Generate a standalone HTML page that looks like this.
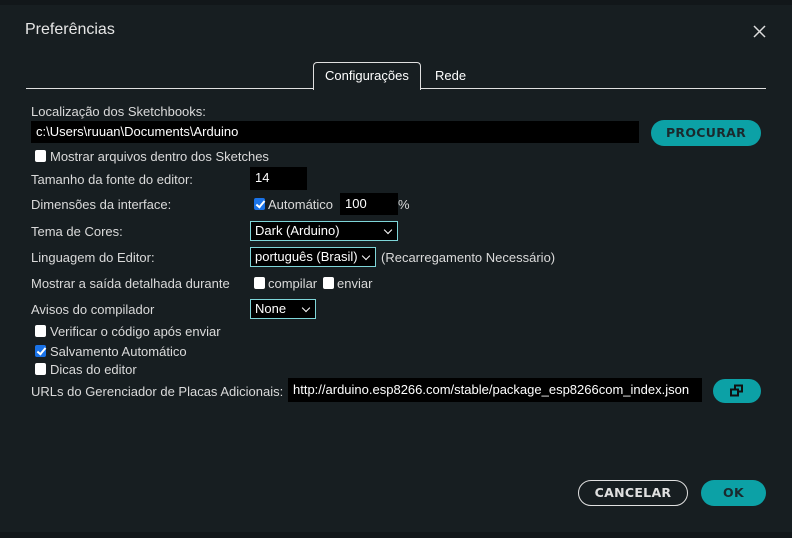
<!DOCTYPE html>
<html><head><meta charset="utf-8"><style>
*{margin:0;padding:0;box-sizing:border-box}
body{width:792px;height:538px;background:#171e21;position:relative;overflow:hidden;font-family:"Liberation Sans Narrow","Liberation Sans",sans-serif;font-size:13px;color:#dadada}
.a{position:absolute;white-space:nowrap}
.inp{position:absolute;background:#000;color:#fff;padding-left:5px;line-height:22px}
.sel{position:absolute;background:#000;border:1px solid #7fd6d9;color:#fff;padding-left:4px;line-height:18px}
.sel:after{content:"";position:absolute;right:6px;top:5px;width:5px;height:5px;border-right:1.5px solid #fff;border-bottom:1.5px solid #fff;transform:rotate(45deg)}
.cb{position:absolute;width:11px;height:12px;background:#fff;border-radius:2px}
.cb.on{background:#1a73e8}
.cb.on:after{content:"";position:absolute;left:3.5px;top:1px;width:3px;height:7px;border-right:2px solid #fff;border-bottom:2px solid #fff;transform:rotate(40deg)}
.btn{position:absolute;border-radius:14px;font-family:"DejaVu Sans","Liberation Sans",sans-serif;font-weight:bold;text-align:center;font-size:12.5px;letter-spacing:.3px}
</style></head><body>
<div style="position:absolute;left:0;top:0;width:792px;height:5px;background:#12171a"></div>
<div style="position:absolute;left:0;top:532px;width:792px;height:6px;background:#12171a"></div>
<div class="a" style="left:25px;top:21px;font-size:16px;color:#e6e6e6">Preferências</div>
<svg class="a" style="left:753px;top:25px" width="13" height="13"><path d="M1 1L12 12M12 1L1 12" stroke="#ddd" stroke-width="1.5"/></svg>
<div style="position:absolute;left:26px;top:88px;width:740px;height:1px;background:#e0e0e0"></div>
<div style="position:absolute;left:313px;top:62px;width:108px;height:28px;border:1px solid #e0e0e0;border-bottom:none;border-radius:4px 4px 0 0;background:#171e21"></div>
<div class="a" style="left:325px;top:68px;color:#fff">Configurações</div>
<div class="a" style="left:435px;top:68px;color:#fff">Rede</div>
<div class="a" style="left:31px;top:104px">Localização dos Sketchbooks:</div>
<div class="inp" style="left:31px;top:121px;width:608px">c:\Users\ruuan\Documents\Arduino</div>
<div class="btn" style="left:651px;top:120px;width:110px;height:26px;line-height:26px;background:#0ca1a6;color:#1a2a2e">PROCURAR</div>
<div class="cb" style="left:35px;top:150px"></div>
<div class="a" style="left:50px;top:149px">Mostrar arquivos dentro dos Sketches</div>
<div class="a" style="left:31px;top:172px">Tamanho da fonte do editor:</div>
<div class="inp" style="left:250px;top:167px;width:57px;height:23px">14</div>
<div class="a" style="left:31px;top:197px">Dimensões da interface:</div>
<div class="cb on" style="left:254px;top:198px"></div>
<div class="a" style="left:268px;top:197px">Automático</div>
<div class="inp" style="left:340px;top:193px;width:58px;height:22px">100</div>
<div class="a" style="left:398px;top:197px">%</div>
<div class="a" style="left:31px;top:224px">Tema de Cores:</div>
<div class="sel" style="left:250px;top:221px;width:148px;height:20px">Dark (Arduino)</div>
<div class="a" style="left:31px;top:250px">Linguagem do Editor:</div>
<div class="sel" style="left:250px;top:247px;width:126px;height:20px">português (Brasil)</div>
<div class="a" style="left:381px;top:250px">(Recarregamento Necessário)</div>
<div class="a" style="left:31px;top:276px">Mostrar a saída detalhada durante</div>
<div class="cb" style="left:254px;top:277px"></div>
<div class="a" style="left:268px;top:276px">compilar</div>
<div class="cb" style="left:323px;top:277px"></div>
<div class="a" style="left:337px;top:276px">enviar</div>
<div class="a" style="left:31px;top:302px">Avisos do compilador</div>
<div class="sel" style="left:250px;top:299px;width:66px;height:20px">None</div>
<div class="cb" style="left:35px;top:325px"></div>
<div class="a" style="left:50px;top:324px">Verificar o código após enviar</div>
<div class="cb on" style="left:35px;top:345px"></div>
<div class="a" style="left:50px;top:344px">Salvamento Automático</div>
<div class="cb" style="left:35px;top:363px"></div>
<div class="a" style="left:50px;top:362px">Dicas do editor</div>
<div class="a" style="left:31px;top:384px">URLs do Gerenciador de Placas Adicionais:</div>
<div class="inp" style="left:288px;top:378px;width:414px;height:24px;line-height:24px">http://arduino.esp8266.com/stable/package_esp8266com_index.json</div>
<div class="btn" style="left:713px;top:379px;width:48px;height:24px;background:#0ca1a6"></div>
<svg class="a" style="left:729px;top:384px" width="16" height="14"><rect x="6" y="1.5" width="7" height="6" fill="none" stroke="#111" stroke-width="2"/><rect x="2" y="5.5" width="7" height="6" fill="#0ca1a6" stroke="#111" stroke-width="2"/></svg>
<div class="btn" style="left:578px;top:480px;width:110px;height:26px;line-height:23px;border:1.5px solid #e0e0e0;color:#e0e0e0">CANCELAR</div>
<div class="btn" style="left:701px;top:480px;width:65px;height:26px;line-height:26px;background:#0ca1a6;color:#1a2a2e">OK</div>
</body></html>
